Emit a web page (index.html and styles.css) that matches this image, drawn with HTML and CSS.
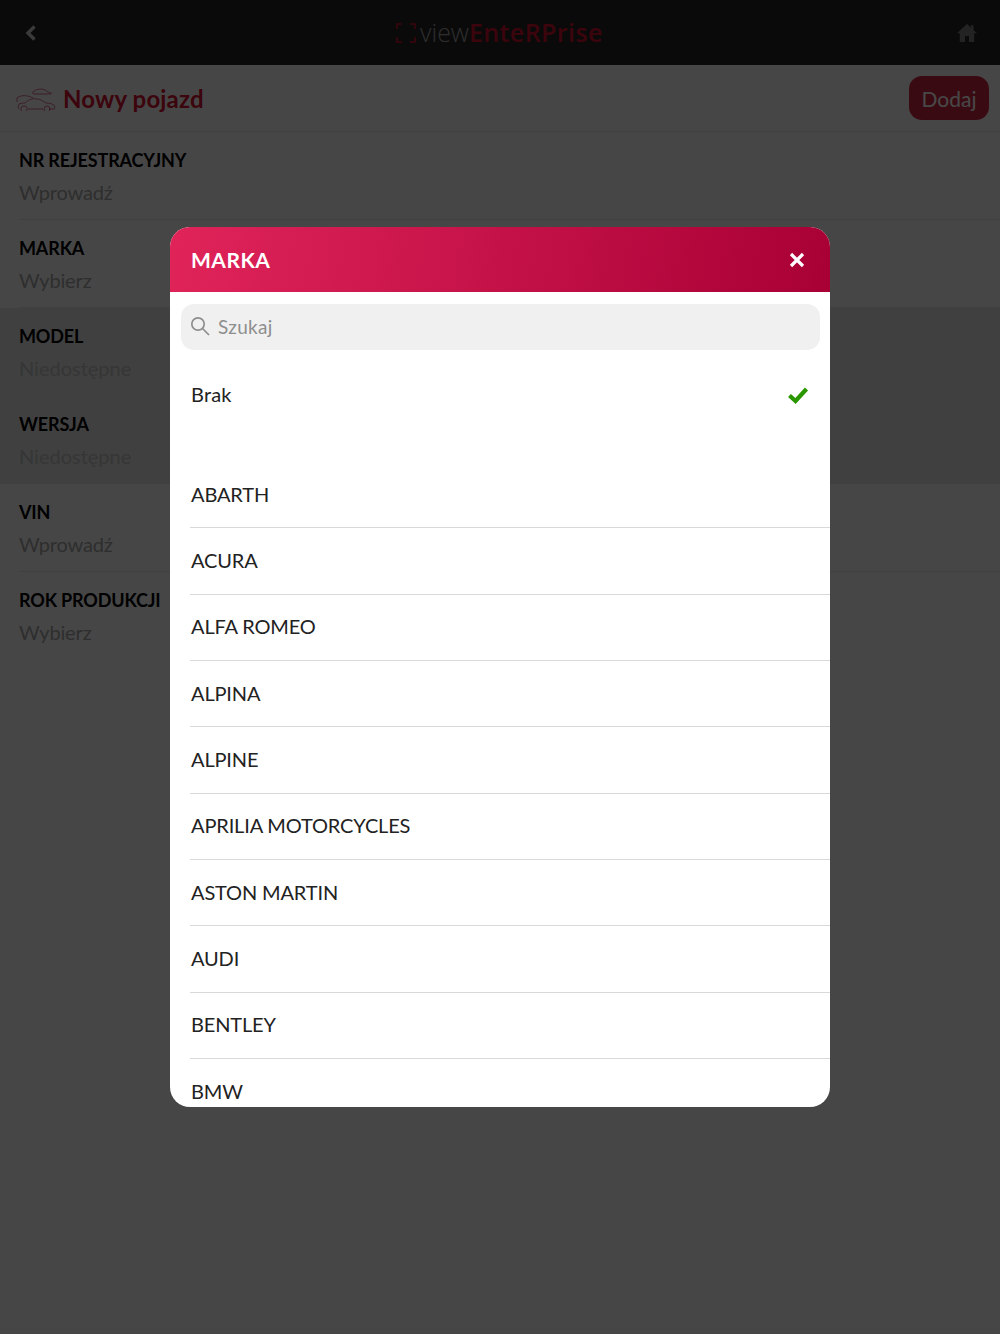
FILE: index.html
```html
<!DOCTYPE html>
<html lang="pl">
<head>
<meta charset="utf-8">
<title>Nowy pojazd</title>
<link rel="stylesheet" href="styles.css">
</head>
<body>
<div class="page">
  <header class="topbar">
    <svg class="back" viewBox="0 0 12 16" width="12" height="16"><path d="M9.500 1.500 3 8l6.500 6.500" fill="none" stroke="#c4c4c4" stroke-width="3.400"/></svg>
    <div class="logo">
      <svg class="logo-mark" viewBox="0 0 20 20" width="20" height="20"><path d="M1 6V1h5M14 1h5v5M19 14v5h-5M6 19H1v-5" fill="none" stroke="#c8102e" stroke-width="1.600"/></svg>
      <span class="logo-view">view</span><span class="logo-ent">EnteRPrise</span>
    </div>
    <svg class="home" viewBox="0 0 20 18" width="20" height="18"><path d="M10 0 0 9.200h2.800V18H8v-6h4v6h5.200V9.200H20L16.500 6V1.200h-2.600v2.400z" fill="#777"/></svg>
  </header>
  <section class="subbar">
    <div class="subtitle">
      <svg class="car" viewBox="0 0 40 26" width="40" height="26" fill="none" stroke="#b0142c" stroke-width=".6">
        <path d="M17 7c1-1 4-3 7-3 3 0 5 .5 8 3l3 1c.5 1 .5 1-1 1H18c-1 0-2-1-1-2z"/>
        <path d="M1 17v-4c2-2 7-3 10-2 2 0 4 1 6 2"/>
        <path d="M3 24c-1-1-1-3 0-5 3-1 4-1 6-1 3-3 7-5 12-4 3 0 6 2 9 4 3 0 7 1 8 2 1 2 1 4 0 4h-5m-6 0H12"/>
        <circle cx="8" cy="24" r="3.200"/><circle cx="31" cy="24" r="3"/>
      </svg>
      <span class="title">Nowy pojazd</span>
    </div>
    <div class="add">Dodaj</div>
  </section>
  <main class="form">
    <div class="field"><div class="label">NR REJESTRACYJNY</div><div class="value">Wprowadź</div></div>
    <div class="field"><div class="label">MARKA</div><div class="value">Wybierz</div></div>
    <div class="field field-off"><div class="label">MODEL</div><div class="value">Niedostępne</div></div>
    <div class="field field-off"><div class="label">WERSJA</div><div class="value">Niedostępne</div></div>
    <div class="field"><div class="label">VIN</div><div class="value">Wprowadź</div></div>
    <div class="field field-last"><div class="label">ROK PRODUKCJI</div><div class="value">Wybierz</div></div>
  </main>
</div>
<div class="overlay">
  <div class="modal">
    <div class="modal-head">
      <span class="modal-title">MARKA</span>
      <svg viewBox="0 0 16 16" width="16" height="16"><path d="M2 2l12 12M14 2 2 14" stroke="#fff" stroke-width="3.200" fill="none"/></svg>
    </div>
    <div class="search">
      <svg viewBox="0 0 20 20" width="20" height="20" fill="none" stroke="#8e8e8e" stroke-width="1.700"><circle cx="8" cy="8" r="6.200"/><path d="M12.500 12.500 19 19"/></svg>
      <span class="search-text">Szukaj</span>
    </div>
    <div class="none-row">
      <span>Brak</span>
      <svg viewBox="0 0 22 18" width="22" height="18"><path d="M2.500 9.500 8.500 15 19.500 3" fill="none" stroke="#2a9600" stroke-width="4.200"/></svg>
    </div>
    <ul class="list">
      <li>ABARTH</li>
      <li>ACURA</li>
      <li>ALFA ROMEO</li>
      <li>ALPINA</li>
      <li>ALPINE</li>
      <li>APRILIA MOTORCYCLES</li>
      <li>ASTON MARTIN</li>
      <li>AUDI</li>
      <li>BENTLEY</li>
      <li>BMW</li>
    </ul>
  </div>
</div>
</body>
</html>
```
FILE: styles.css
```css
* { box-sizing: border-box; }
html, body { margin: 0; height: 100%; }
body { font-family: "Lato", "Liberation Sans", sans-serif; background: #ebebeb; color: #000; position: relative; overflow: hidden; }
.page { height: 1334px; display: flex; flex-direction: column; }
.topbar { height: 66px; background: #222; border-bottom: 1px solid #f0f0f0; display: flex; align-items: center; justify-content: space-between; padding: 0 23px 0 25px; position: relative; flex: none; }
.logo { display: flex; align-items: center; position: absolute; left: 396px; top: 16px; height: 32px; }
.logo-mark { margin-right: 4px; margin-top: 2px; }
.logo-view { color: #999; font-family: "Open Sans", sans-serif; font-weight: 300; font-size: 25px; }
.logo-ent { color: #c8102e; font-weight: 600; font-family: "Open Sans", sans-serif; font-size: 25px; letter-spacing: .4px; }
.subbar { height: 66px; flex: none; display: flex; align-items: center; justify-content: space-between; padding: 0 11px 1px 16px; border-bottom: 1px solid #d8d8d8; }
.subtitle { display: flex; align-items: center; gap: 7px; }
.title { color: #c8102e; font-weight: 700; font-size: 24px; letter-spacing: .15px; }
.add { width: 80px; height: 44px; background: #c2223c; border-radius: 13px; color: #f0f0f0; font-size: 21px; display: flex; align-items: center; justify-content: center; }
.form { display: flex; flex-direction: column; }
.field { height: 88px; padding: 16px 0 0 19px; position: relative; }
.field::after { content: ""; position: absolute; left: 19px; right: 0; bottom: 0; height: 1px; background: #d8d8d8; }
.field-last::after { display: none; }
.field-off { background: #d6d6d6; }
.label { font-size: 18px; line-height: 24px; font-weight: 700; letter-spacing: -.15px; color: #000; }
.value { margin-top: 8px; font-size: 20px; line-height: 24px; color: #9b9b9b; letter-spacing: -.15px; }
.field-off .value { color: #b4b4b4; letter-spacing: 0; }
.overlay { position: absolute; inset: 0; background: rgba(0, 0, 0, .7); display: flex; justify-content: center; padding-top: 227px; }
.modal { width: 660px; height: 880px; background: #fff; border-radius: 20px; overflow: hidden; display: flex; flex-direction: column; }
.modal-head { height: 65px; flex: none; background: linear-gradient(100deg, #e0245a 0%, #a80035 100%); display: flex; align-items: center; justify-content: space-between; padding: 0 25px 0 21px; color: #fff; }
.modal-title { font-size: 21px; font-weight: 700; letter-spacing: .5px; }
.search { margin: 12px 10px 0 11px; height: 46px; background: #f0f0f0; border-radius: 13px; display: flex; align-items: center; gap: 8px; padding: 0 0 2px 9px; flex: none; }
.search-text { font-size: 19px; color: #8e8e8e; letter-spacing: .3px; }
.none-row { height: 90px; flex: none; display: flex; align-items: center; justify-content: space-between; padding: 0 21px; font-size: 20px; color: #222; letter-spacing: .2px; }
.none-row span { padding-bottom: 2px; }
.list { list-style: none; margin: 22px 0 0; padding: 0 0 0 20px; flex: none; }
.list li { height: 66.350px; display: flex; align-items: center; padding: 0 0 2px 1px; border-bottom: 1px solid #d9d9d9; font-size: 20px; color: #222; letter-spacing: -.15px; }
.list li:last-child { border-bottom: 0; }
```
